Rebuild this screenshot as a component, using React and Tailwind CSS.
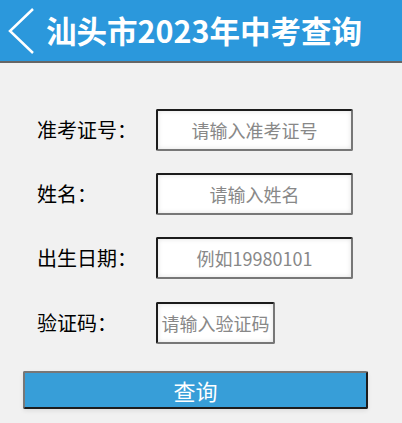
import React from "react";

const font = { fontFamily: '"Noto Sans CJK SC", "Noto Sans", sans-serif' };

function Row({ label, placeholder, small, mt }) {
  return (
    <div className={`flex items-center ${mt}`}>
      <div className="w-[156px] pl-[37px] text-[20px] leading-none text-black">{label}</div>
      <input
        placeholder={placeholder}
        className={`${small ? "w-[119px]" : "w-[197px]"} h-[42px] px-0 text-center text-[18px] bg-white border-2 border-t-[#1c1c1c] border-l-[#1c1c1c] border-b-[#777] border-r-[#777] rounded-[2px] shadow-[inset_0_0_5px_rgba(0,0,0,0.12)] placeholder:text-[#888] outline-none`}
        style={font}
      />
    </div>
  );
}

export default function App() {
  return (
    <div className="w-[402px] h-[423px] bg-[#f1f1f1] overflow-hidden" style={font}>
      <div className="h-[63px] bg-[#2b98dc] border-b-2 border-[#666] flex items-center">
        <svg width="30" height="48" viewBox="0 0 30 48" className="ml-[6px]">
          <polyline points="27,2 4,24 27,46" fill="none" stroke="white" strokeWidth="2.5" />
        </svg>
        <div className="ml-[10px] text-white font-bold text-[30.5px] leading-none">汕头市2023年中考查询</div>
      </div>
      <Row label="准考证号：" placeholder="请输入准考证号" mt="mt-[46px]" />
      <Row label="姓名：" placeholder="请输入姓名" mt="mt-[22px]" />
      <Row label="出生日期：" placeholder="例如19980101" mt="mt-[22px]" />
      <Row label="验证码：" placeholder="请输入验证码" small mt="mt-[23px]" />
      <button className="mt-[27px] ml-[23px] w-[345px] h-[38px] bg-[#379ed8] border-2 border-t-[#777] border-l-[#777] border-b-[#1c1c1c] border-r-[#1c1c1c] rounded-[2px] text-white text-[22px] leading-none flex items-center justify-center shadow-[0_2px_4px_rgba(0,0,0,0.08)]">
        查询
      </button>
    </div>
  );
}
